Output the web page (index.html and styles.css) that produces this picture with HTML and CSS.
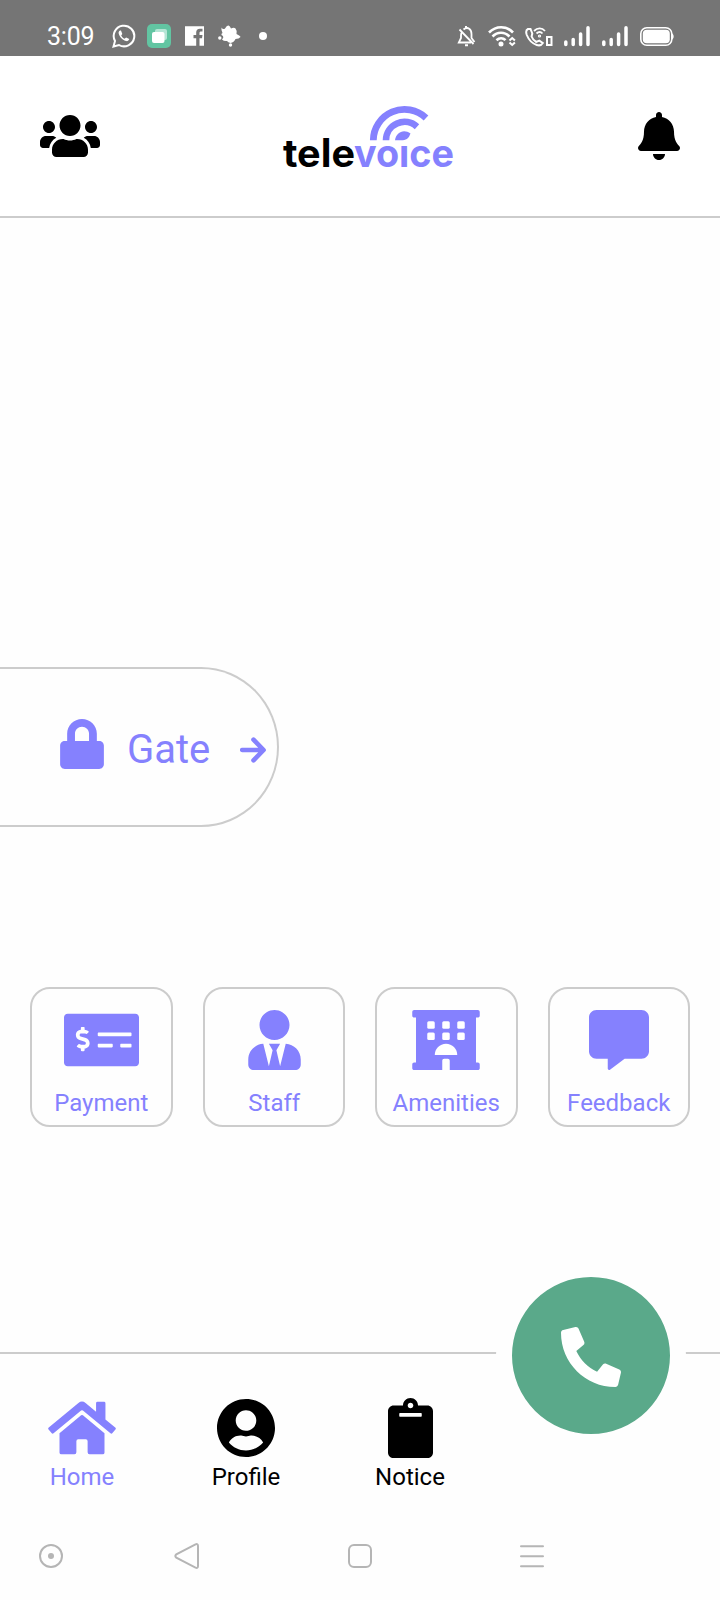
FILE: index.html
```html
<!DOCTYPE html>
<html lang="en">
<head>
<meta charset="utf-8">
<title>televoice</title>
<link rel="stylesheet" href="styles.css">
</head>
<body>
<div class="screen">
  <div class="status">
    <span class="time">3:09</span>
    <div class="status-left">
      <svg width="24" height="24" viewBox="0 0 24 24"><path d="M1.500 22.500L3 17A10.300 10.300 0 1 1 7 21Z" fill="none" stroke="#fff" stroke-width="2"/><path d="M8 6.500c-1 .5-1.600 1.800-1.300 3 .8 3.500 4 6.800 7.600 7.600 1.400.2 2.600-.6 3-2l-3.200-1.700-1.500 1.400c-1.500-.7-2.700-1.900-3.400-3.300l1.100-1.600L9 6.600z" fill="#fff"/></svg>
      <svg width="24" height="24" viewBox="0 0 24 24"><rect width="24" height="24" rx="5" fill="#62c5a2"/><rect x="8" y="5" width="12" height="11" rx="2" fill="#b5e5d5"/><rect x="5" y="8" width="12.500" height="11" rx="2" fill="#fff"/></svg>
      <svg width="19" height="24" viewBox="0 0 19 24"><path d="M0 2.200h19v19.500h-4.500v-7.500h2.500l.5-3.200h-3V9c0-1 .5-1.500 1.500-1.500h1.500V4.800h-2.500c-2.600 0-3.800 1.400-3.800 3.800V11H8.500v3.200h2.700v7.500H0z" fill="#fff"/></svg>
      <svg width="23" height="24" viewBox="0 0 23 24"><path d="M3.500 3.500Q5 6 7 4.500 9 1 10.500 1.500 12 2 13 4.500 16 3 17.500 4.500 19 6 18.500 10 22.500 12 22.500 13 21 15 17.500 15 16 18.500 12.500 19 10 18.500 9 17 6 17.500 4 15.500 6 13.500 5 12 2 10.500 4.500 9 3 6 3.500 3.500z" fill="#fff"/><circle cx="1.800" cy="14" r="1.700" fill="#fff"/><circle cx="12.500" cy="21" r="1.700" fill="#fff"/></svg>
      <svg class="dot" width="8" height="24" viewBox="0 0 8 24"><circle cx="4" cy="12" r="4" fill="#fff"/></svg>
    </div>
    <div class="status-right">
      <svg width="19" height="24" viewBox="0 0 19 24" fill="none" stroke="#fff" stroke-width="1.800"><path d="M5 8c-.8 1-1 2-1 3.500V14L1.800 18.500H14M6.500 5.500C11 2 14.500 5.500 14.500 10v4l3 4M2.500 5.500l14 14.500"/><path d="M9 2v2M8 21.200h3" stroke-width="2"/></svg>
      <svg width="28" height="24" viewBox="0 0 28 24" fill="none" stroke="#fff" stroke-width="2.600"><path d="M1 8.500c7-7 17.500-7 24 0M4.500 12.500c5-5 12-5 17 0M8.500 16.200c2.800-2.700 6.500-2.700 9 0"/><circle cx="13" cy="20" r="1.200"/><path d="M21.500 16.500l2.700-2.500 2.700 2.500M21.500 18.500l2.700 2.500 2.700-2.500" stroke-width="2"/></svg>
      <svg class="calling" width="28" height="24" viewBox="0 0 28 24" fill="none" stroke="#fff" stroke-width="2"><path d="M3 5c-2 1-2.300 3-1.200 6 1.800 4.500 5.500 8.500 10 10 3 1 5-.3 6-2l-3.500-2.300-3 1.300c-2-1-4-3.500-4.700-5.500L7.300 9.500 5.500 5z"/><path d="M9 7c3.500-3.500 8-3.500 11 0M11.500 9.500c2-2 4.200-2 6 0" stroke-width="1.800"/><circle cx="14.500" cy="12" r=".6"/><path d="M22 13h4.500v8H22z"/></svg>
      <svg width="26" height="24" viewBox="0 0 26 24" stroke="#fff" stroke-width="3.500" stroke-linecap="round"><path d="M1.800 18v2.500M9.200 15.500v5M16.600 10v10.500M24 3.700v16.800"/></svg>
      <svg width="26" height="24" viewBox="0 0 26 24" stroke="#fff" stroke-width="3.500" stroke-linecap="round"><path d="M1.800 18v2.500M9.200 15.500v5M16.600 10v10.500M24 3.700v16.800"/></svg>
      <svg width="34" height="24" viewBox="0 0 34 24"><rect x=".8" y="3.800" width="31" height="17.500" rx="6" fill="none" stroke="#fff" stroke-width="1.600"/><rect x="2.800" y="5.800" width="27" height="13.500" rx="4" fill="#fff"/><path d="M32 9.500c2.200 1 2.200 5 0 6z" fill="#fff"/></svg>
    </div>
  </div>

  <header class="header">
    <svg width="60" height="48" viewBox="0 0 640 512"><path d="M96 224c35.300 0 64-28.700 64-64s-28.700-64-64-64-64 28.700-64 64 28.700 64 64 64zm448 0c35.300 0 64-28.700 64-64s-28.700-64-64-64-64 28.700-64 64 28.700 64 64 64zm32 32h-64c-17.600 0-33.500 7.100-45.100 18.600 40.300 22.100 68.900 62 75.100 109.400h66c17.700 0 32-14.300 32-32v-32c0-35.300-28.700-64-64-64zm-256 0c61.900 0 112-50.100 112-112S381.900 32 320 32 208 82.100 208 144s50.100 112 112 112zm76.800 32h-8.300c-20.800 10-43.900 16-68.500 16s-47.600-6-68.500-16h-8.300C179.600 288 128 339.600 128 403.200V432c0 26.500 21.500 48 48 48h288c26.500 0 48-21.500 48-48v-28.800c0-63.600-51.600-115.200-115.200-115.200zm-223.700-13.400C161.500 263.100 145.600 256 128 256H64c-35.300 0-64 28.700-64 64v32c0 17.700 14.300 32 32 32h65.900c6.300-47.400 34.900-87.300 75.200-109.400z"/></svg>
    <svg class="logo" width="176" height="86" viewBox="0 -8 176 86">
      <text x="3" y="65.500" textLength="72" lengthAdjust="spacingAndGlyphs">tele</text>
      <text class="accent" x="74" y="65.500" textLength="100" lengthAdjust="spacingAndGlyphs">voice</text>
      <rect x="119" y="34" width="15" height="9.500" fill="#fff"/>
      <g fill="none" stroke="#8581fe"><path d="M93.300 39.300A31.200 31 0 0 1 146 17" stroke-width="6.800"/><path d="M106 39.300A18.500 18.300 0 0 1 137 25.700" stroke-width="6.600"/></g>
      <path d="M115 39.300C116 31 124 27.500 130.500 32.500 128.500 38 126 39.300 121 39.300z" fill="#8581fe"/>
    </svg>
    <svg width="42" height="48" viewBox="0 0 448 512"><path d="M224 512c35.320 0 63.970-28.650 63.970-64H160.030c0 35.350 28.650 64 63.970 64zm215.390-149.710c-19.320-20.760-55.470-51.990-55.470-154.290 0-77.700-54.480-139.900-127.940-155.160V32c0-17.670-14.320-32-31.980-32s-31.980 14.330-31.980 32v20.840C118.560 68.100 64.080 130.300 64.080 208c0 102.300-36.150 133.530-55.470 154.290-6 6.450-8.660 14.160-8.610 21.710.11 16.400 12.980 32 32.100 32h383.800c19.120 0 32-15.600 32.100-32 .05-7.550-2.610-15.270-8.610-21.710z"/></svg>
  </header>

  <main>
    <div class="gate">
      <svg width="44" height="50" viewBox="0 0 448 512"><path d="M400 224h-24v-72C376 68.200 307.800 0 224 0S72 68.200 72 152v72H48c-26.500 0-48 21.500-48 48v192c0 26.500 21.500 48 48 48h352c26.500 0 48-21.500 48-48V272c0-26.500-21.500-48-48-48zm-104 0H152v-72c0-39.700 32.300-72 72-72s72 32.300 72 72v72z"/></svg>
      <span class="gate-label">Gate</span>
      <svg class="arrow" width="26" height="26" viewBox="0 0 26 26"><path d="M2.200 13h21M13.500 2.700L23.600 13 13.500 23.300"/></svg>
    </div>

    <div class="cards">
      <div class="card">
        <svg width="75" height="60" viewBox="0 0 640 512"><path d="M608 32H32C14.330 32 0 46.330 0 64v384c0 17.670 14.330 32 32 32h576c17.670 0 32-14.330 32-32V64c0-17.670-14.330-32-32-32zM176 327.880V344c0 4.420-3.580 8-8 8h-16c-4.420 0-8-3.580-8-8v-16.290c-11.290-.58-22.270-4.520-31.370-11.350-3.900-2.930-4.100-8.770-.57-12.140l11.750-11.210c2.770-2.640 6.890-2.760 10.130-.73 3.870 2.420 8.260 3.720 12.820 3.720h28.110c6.500 0 11.800-5.920 11.800-13.190 0-5.950-3.610-11.190-8.770-12.730l-45-13.500c-18.590-5.580-31.580-23.420-31.580-43.390 0-24.520 19.050-44.440 42.670-45.070V152c0-4.420 3.580-8 8-8h16c4.420 0 8 3.580 8 8v16.290c11.290.58 22.270 4.510 31.370 11.350 3.900 2.930 4.100 8.770.57 12.140l-11.750 11.210c-2.770 2.640-6.890 2.760-10.130.73-3.870-2.430-8.260-3.720-12.820-3.720h-28.110c-6.500 0-11.800 5.920-11.800 13.190 0 5.950 3.610 11.190 8.770 12.730l45 13.500c18.590 5.580 31.580 23.420 31.580 43.390 0 24.530-19.050 44.440-42.670 45.070zM416 312c0 4.420-3.580 8-8 8H296c-4.420 0-8-3.580-8-8v-16c0-4.420 3.580-8 8-8h112c4.420 0 8 3.580 8 8v16zm160 0c0 4.420-3.580 8-8 8h-80c-4.420 0-8-3.580-8-8v-16c0-4.420 3.580-8 8-8h80c4.420 0 8 3.580 8 8v16zm0-96c0 4.420-3.580 8-8 8H296c-4.420 0-8-3.580-8-8v-16c0-4.420 3.580-8 8-8h272c4.420 0 8 3.580 8 8v16z"/></svg>
        <span>Payment</span>
      </div>
      <div class="card staff">
        <svg width="53" height="60" viewBox="0 0 448 512"><path d="M224 256c70.700 0 128-57.300 128-128S294.700 0 224 0 96 57.300 96 128s57.300 128 128 128zm95.800 32.600L272 480l-32-136 32-56h-96l32 56-32 136-47.800-191.400C56.900 292 0 350.300 0 422.400V464c0 26.500 21.500 48 48 48h352c26.500 0 48-21.500 48-48v-41.600c0-72.100-56.900-130.400-128.200-133.800z"/></svg>
        <span>Staff</span>
      </div>
      <div class="card">
        <svg width="68" height="60" viewBox="0 0 576 512"><path d="M560 64c8.840 0 16-7.160 16-16V16c0-8.840-7.160-16-16-16H16C7.160 0 0 7.160 0 16v32c0 8.840 7.160 16 16 16h16v384H16c-8.840 0-16 7.160-16 16v32c0 8.840 7.160 16 16 16h240v-80c0-8.800 7.200-16 16-16h32c8.800 0 16 7.200 16 16v80h240c8.840 0 16-7.160 16-16v-32c0-8.840-7.160-16-16-16h-16V64z"/><g fill="#fff"><rect x="128" y="96" width="64" height="64" rx="13"/><rect x="256" y="96" width="64" height="64" rx="13"/><rect x="384" y="96" width="64" height="64" rx="13"/><rect x="128" y="192" width="64" height="64" rx="13"/><rect x="256" y="192" width="64" height="64" rx="13"/><rect x="384" y="192" width="64" height="64" rx="13"/><path d="M192 384c0-53 43-96 96-96s96 43 96 96z"/></g></svg>
        <span>Amenities</span>
      </div>
      <div class="card">
        <svg width="60" height="60" viewBox="0 0 512 512"><path d="M448 0H64C28.700 0 0 28.700 0 64v288c0 35.300 28.700 64 64 64h96v84c0 9.800 11.200 15.500 19.100 9.700L304 416h144c35.300 0 64-28.700 64-64V64c0-35.300-28.700-64-64-64z"/></svg>
        <span>Feedback</span>
      </div>
    </div>
  </main>

  <footer class="tabs">
    <div class="tab active">
      <svg width="68" height="60" viewBox="0 0 576 512"><path d="M280.370 148.260L96 300.110V464a16 16 0 0 0 16 16l112.060-.29a16 16 0 0 0 15.920-16V368a16 16 0 0 1 16-16h64a16 16 0 0 1 16 16v95.640a16 16 0 0 0 16 16.050L464 480a16 16 0 0 0 16-16V300L295.670 148.260a12.190 12.190 0 0 0-15.300 0zM571.600 251.470L488 182.560V44.050a12 12 0 0 0-12-12h-56a12 12 0 0 0-12 12v72.610L318.470 43a48 48 0 0 0-61 0L4.340 251.470a12 12 0 0 0-1.600 16.900l25.500 31A12 12 0 0 0 45.150 301l235.220-193.740a12.190 12.190 0 0 1 15.300 0L530.900 301a12 12 0 0 0 16.900-1.600l25.500-31a12 12 0 0 0-1.700-16.930z"/></svg>
      <span>Home</span>
    </div>
    <div class="tab">
      <svg width="58" height="60" viewBox="0 0 496 512"><path d="M248 8C111 8 0 119 0 256s111 248 248 248 248-111 248-248S385 8 248 8zm0 96c48.600 0 88 39.400 88 88s-39.400 88-88 88-88-39.400-88-88 39.400-88 88-88zm0 344c-58.700 0-111.300-26.600-146.500-68.200 18.800-35.400 55.600-59.800 98.500-59.800 2.400 0 4.800.4 7.100 1.100 13 4.200 26.600 6.900 40.900 6.900 14.300 0 28-2.700 40.900-6.900 2.300-.7 4.700-1.100 7.100-1.100 42.900 0 79.700 24.400 98.500 59.800C359.300 421.400 306.700 448 248 448z"/></svg>
      <span>Profile</span>
    </div>
    <div class="tab">
      <svg width="45" height="60" viewBox="0 0 384 512"><path d="M384 112v352c0 26.510-21.490 48-48 48H48c-26.510 0-48-21.490-48-48V112c0-26.510 21.490-48 48-48h80c0-35.290 28.710-64 64-64s64 28.710 64 64h80c26.510 0 48 21.490 48 48zM192 40c-13.255 0-24 10.745-24 24s10.745 24 24 24 24-10.745 24-24-10.745-24-24-24m96 114v-20a6 6 0 0 0-6-6H102a6 6 0 0 0-6 6v20a6 6 0 0 0 6 6h180a6 6 0 0 0 6-6z"/></svg>
      <span>Notice</span>
    </div>
    <div class="call">
      <svg width="60" height="60" viewBox="0 0 512 512"><path d="M493.400 24.600l-104-24c-11.300-2.600-22.900 3.300-27.500 13.900l-48 112c-4.200 9.800-1.400 21.300 6.900 28l60.600 49.600c-36 76.700-98.900 140.500-177.200 177.200l-49.600-60.600c-6.800-8.300-18.200-11.100-28-6.900l-112 48C3.900 366.500-2 378.100.6 389.400l24 104C27.100 504.200 36.700 512 48 512c256.100 0 464-207.500 464-464 0-11.200-7.700-20.900-18.600-23.400z"/></svg>
    </div>
  </footer>

  <nav class="system">
    <svg width="24" height="26" viewBox="0 0 24 26"><circle cx="12" cy="13" r="11"/><circle cx="12" cy="13" r="3" fill="#b5b5b5" stroke="none"/></svg>
    <svg class="back" width="26" height="26" viewBox="0 0 26 26"><path d="M21.500 1.400L2.300 11.400q-2 1.600 0 3.200L21.500 24.600q2.500 1 2.500-1.600V3q0-2.600-2.500-1.600z"/></svg>
    <svg class="recent" width="24" height="26" viewBox="0 0 24 26"><rect x="1" y="2" width="22" height="22" rx="5"/></svg>
    <svg class="menu" width="24" height="26" viewBox="0 0 24 26"><path d="M1 3.200h22M1 13.200h22M1 23.200h22"/></svg>
  </nav>
</div>
</body>
</html>
```

FILE: styles.css
```css
* { box-sizing: border-box; }
body {
  margin: 0;
  background: #fff;
  font-family: Roboto, sans-serif;
  color: #000;
}
svg { display: block; flex: none; }
.screen {
  width: 720px;
  height: 1600px;
  display: flex;
  flex-direction: column;
  background: #fefefe;
  overflow: hidden;
}
.status {
  height: 56px;
  padding: 24px 46px 8px 47px;
  display: flex;
  background: #757575;
}
.time {
  width: 65px;
  margin-top: 1px;
  font-size: 25px;
  line-height: 24px;
  color: #fff;
  letter-spacing: -0.2px;
}
.status-left { display: flex; gap: 14px; margin-right: auto; }
.status-left > :first-child { margin-right: -3px; }
.dot { margin-left: 4px; }
.status-right { display: flex; gap: 12px; }
.calling { margin: 0 -1px 0 -3px; }
.header {
  height: 162px;
  padding: 0 40px;
  display: flex;
  align-items: center;
  justify-content: space-between;
  border-bottom: 2px solid #ccc;
  background: #fff;
}
.logo { margin-right: 2px; }
.logo text { font-family: Inter, sans-serif; font-weight: 700; font-size: 39px; }
.logo .accent { fill: #8581fe; }
.gate {
  width: 279px;
  height: 160px;
  margin-top: 449px;
  padding: 0 11px 0 60px;
  display: flex;
  align-items: center;
  border: 2px solid #ccc;
  border-left: 0;
  border-radius: 0 78px 78px 0 / 0 80px 80px 0;
  color: #8581fe;
  fill: #8581fe;
}
.gate svg:first-child { margin-top: -6px; }
.gate-label { margin-left: 23px; font-size: 40px; line-height: 48px; margin-top: 6px; }
.arrow { margin-left: auto; margin-top: 5px; fill: none; stroke: #8581fe; stroke-width: 4.6px; stroke-linecap: round; stroke-linejoin: round; }
.cards {
  margin-top: 160px;
  padding: 0 30px;
  display: grid;
  grid-template-columns: repeat(4, 1fr);
  gap: 30px;
}
.card {
  height: 140px;
  padding-top: 20.6px;
  display: flex;
  flex-direction: column;
  align-items: center;
  gap: 19px;
  border: 2px solid #ccc;
  border-radius: 20px;
  color: #8581fe;
  fill: #8581fe;
  font-size: 24px;
  line-height: 28px;
}
.staff { padding-left: 1px; }
.tabs {
  position: relative;
  height: 150px;
  margin-top: 225px;
  padding: 43.5px 228px 0 0;
  display: grid;
  grid-template-columns: repeat(3, 1fr);
  border-top: 2px solid #ccc;
}
.tab {
  display: flex;
  flex-direction: column;
  align-items: center;
  gap: 5.5px;
  font-size: 24px;
  line-height: 28px;
}
.active { color: #8581fe; fill: #8581fe; }
.call {
  position: absolute;
  top: -93px;
  right: 34px;
  width: 190px;
  height: 189px;
  display: flex;
  align-items: center;
  justify-content: center;
  border: 16px solid #fefefe;
  border-radius: 50%;
  background: #5aa98a;
}
.call svg { fill: #fff; transform: scaleX(-1); margin-top: 2px; }
.system {
  padding: 41px 39px 0;
  display: flex;
  fill: none;
  stroke: #b5b5b5;
  stroke-width: 2px;
  stroke-linecap: round;
}
.back { margin-left: 111px; }
.recent { margin-left: 148px; }
.menu { margin-left: 148px; }
```
